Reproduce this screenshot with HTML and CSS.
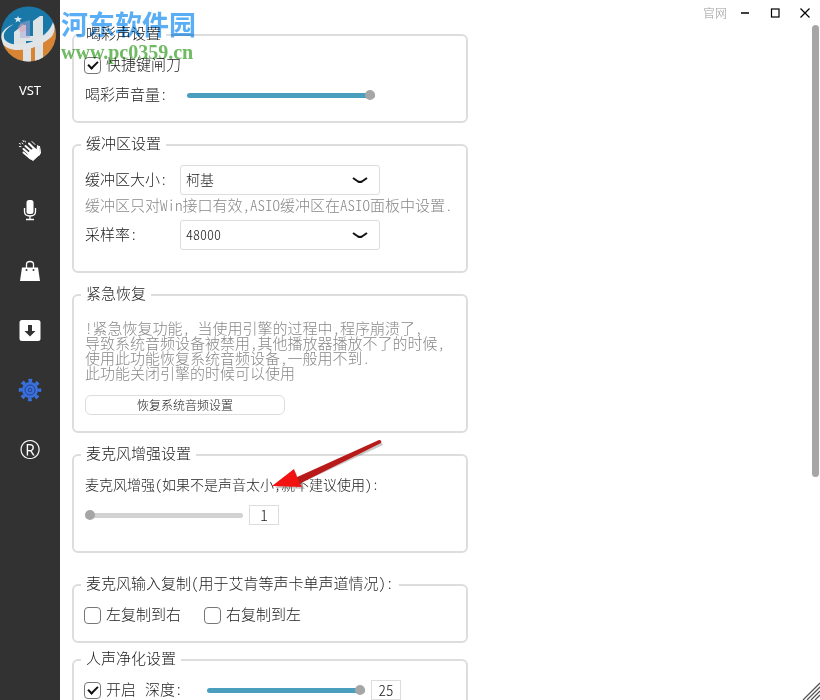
FILE: index.html
```html
<!DOCTYPE html>
<html lang="zh-CN">
<head>
    <meta charset="UTF-8">
    <meta name="viewport" content="width=device-width, initial-scale=1.0">
    <title>设置</title>
    <link rel="stylesheet" href="styles.css">
</head>
<body>

    <nav class="sidebar">
        <a class="nav-item nav-text" href="#vst">VST</a>
        <a class="nav-item" href="#effects" aria-label="喝彩">
            <svg width="24" height="24" viewBox="0 0 24 24" fill="none" stroke="#fff" stroke-linecap="round">
                <path d="M5.500 14.500l7 6M5.500 11l8 7M7.500 8l8 7M11 5.500l7 7" stroke-width="2"/>
                <path d="M10 15l6-5 3 2 .5-4.500q1.500 0 1.700 3l.3 6-6.500 6-4-3z" fill="#fff" stroke-width="1"/>
                <path d="M14 3.500l3 3M21.500 8.500q1 4 1 6.500l-1.500 2.500" stroke-width="1"/>
                <path d="M1.500 5.500l1 .5M5 2.500l.5 1M1.500 8.500l1.500.2M4 5l1 .8M7 3l.3 1" stroke-width="1"/>
            </svg>
        </a>
        <a class="nav-item" href="#mic" aria-label="麦克风">
            <svg width="24" height="24" viewBox="0 0 24 24" fill="none" stroke="#fff">
                <rect x="8.500" y="2" width="7" height="14" rx="2.500" fill="#fff" stroke="none"/>
                <path d="M6.500 10v3.500q0 4.500 5.500 4.500t5.500-4.500V10M12 18v3.500M8 21.500h8" stroke-width="1.300"/>
            </svg>
        </a>
        <a class="nav-item" href="#shop" aria-label="商店">
            <svg width="24" height="24" viewBox="0 0 24 24">
                <path d="M4 9.500h16l2 13.500H2z" fill="#fff"/>
                <path d="M8.500 11V6.500q0-3 3.500-3t3.500 3V11" fill="none" stroke="#fff" stroke-width="1.300"/>
                <circle cx="8.500" cy="12" r="1" fill="#323232"/>
                <circle cx="15.500" cy="12" r="1" fill="#323232"/>
            </svg>
        </a>
        <a class="nav-item" href="#download" aria-label="下载">
            <svg width="24" height="24" viewBox="0 0 24 24">
                <rect x="1.500" y="2" width="21" height="21" rx="2.500" fill="#fff"/>
                <path d="M10 7h4v6h3.500L12 18.500 6.500 13H10z" fill="#323232"/>
            </svg>
        </a>
        <a class="nav-item" href="#settings" aria-label="设置">
            <svg width="24" height="24" viewBox="0 0 24 24" fill="none" stroke="#3a70dc">
                <circle cx="12" cy="12" r="9.500" stroke-width="3.500" stroke-dasharray="3.730 3.730" stroke-dashoffset="1.860"/>
                <circle cx="12" cy="12" r="8" fill="#3a70dc" stroke="none"/>
                <circle cx="12" cy="12" r="5" stroke="#26418a" stroke-width="1"/>
                <circle cx="12" cy="12" r="1.800" fill="#3a70dc" stroke="#26418a"/>
            </svg>
        </a>
        <a class="nav-item nav-reg" href="#register">®</a>
    </nav>

    <div class="window">
        <header class="titlebar">
            <a class="site-link" href="#site">官网</a>
            <button class="win-button" aria-label="最小化">
                <svg width="10" height="10"><path d="M1 5h8" stroke="#000" stroke-width="1.500"/></svg>
            </button>
            <button class="win-button" aria-label="最大化">
                <svg width="10" height="10"><rect x="1.500" y="1" width="7.500" height="8" fill="none" stroke="#000" stroke-width="1.200"/></svg>
            </button>
            <button class="win-button" aria-label="关闭">
                <svg width="10" height="10"><path d="M.5.5l9 9M9.500.5l-9 9" stroke="#000" stroke-width="1.200"/></svg>
            </button>
        </header>

        <div class="body">
            <main class="settings">
                <fieldset>
                    <legend>喝彩声设置</legend>
                    <div class="row">
                        <label class="check"><input type="checkbox" checked><span>快捷键闸刀</span></label>
                    </div>
                    <div class="row">
                        <label class="volume-label" for="volume">喝彩声音量:</label>
                        <input class="slider slider-full slider-wide" id="volume" type="range" min="0" max="100" value="100">
                    </div>
                </fieldset>

                <fieldset class="buffer">
                    <legend>缓冲区设置</legend>
                    <div class="row">
                        <label class="select-label" for="buffer-size">缓冲区大小:</label>
                        <div class="select-box">
                            <select id="buffer-size"><option>柯基</option></select>
                            <svg width="16" height="8" viewBox="0 0 16 8"><path d="M1 2l5 3.500q2 1 4 0L15 2" fill="none" stroke="#111" stroke-width="2"/></svg>
                        </div>
                    </div>
                    <p class="note">缓冲区只对Win接口有效,ASIO缓冲区在ASIO面板中设置.</p>
                    <div class="row">
                        <label class="select-label" for="sample-rate">采样率:</label>
                        <div class="select-box">
                            <select id="sample-rate"><option>48000</option></select>
                            <svg width="16" height="8" viewBox="0 0 16 8"><path d="M1 2l5 3.500q2 1 4 0L15 2" fill="none" stroke="#111" stroke-width="2"/></svg>
                        </div>
                    </div>
                </fieldset>

                <fieldset class="restore">
                    <legend>紧急恢复</legend>
                    <p class="help">!紧急恢复功能,&nbsp;当使用引擎的过程中,程序崩溃了,<br>导致系统音频设备被禁用,其他播放器播放不了的时候,<br>使用此功能恢复系统音频设备,一般用不到.<br>此功能关闭引擎的时候可以使用</p>
                    <button class="restore-button">恢复系统音频设置</button>
                </fieldset>

                <fieldset class="boost">
                    <legend>麦克风增强设置</legend>
                    <div class="row">
                        <label class="boost-label" for="boost">麦克风增强(如果不是声音太小,就不建议使用):</label>
                    </div>
                    <div class="row">
                        <input class="slider" id="boost" type="range" min="1" max="10" value="1">
                        <input class="value" type="text" value="1" aria-label="增强值">
                    </div>
                </fieldset>

                <fieldset class="copy">
                    <legend>麦克风输入复制(用于艾肯等声卡单声道情况):</legend>
                    <div class="row copy-row">
                        <label class="check"><input type="checkbox"><span>左复制到右</span></label>
                        <label class="check"><input type="checkbox"><span>右复制到左</span></label>
                    </div>
                </fieldset>

                <fieldset class="clean">
                    <legend>人声净化设置</legend>
                    <div class="row">
                        <label class="check"><input type="checkbox" checked><span>开启</span></label>
                        <label class="depth-label" for="depth">深度:</label>
                        <input class="slider slider-full" id="depth" type="range" min="0" max="25" value="25">
                        <input class="value" type="text" value="25" aria-label="深度值">
                    </div>
                </fieldset>
            </main>
            <div class="scrollbar"><div class="thumb"></div></div>
        </div>
    </div>

    <!-- site stamp -->
    <div class="stamp">
        <svg class="stamp-logo" width="56" height="58" viewBox="0 0 56 58">
            <defs>
                <clipPath id="disc"><circle cx="28.500" cy="28" r="27.500"/></clipPath>
            </defs>
            <g clip-path="url(#disc)">
                <rect width="56" height="58" fill="#1a78a8"/>
                <path d="M0 36q14 10 32 3t23-22l3 41H0z" fill="#d98432"/>
                <path d="M14 26l9-7h3v20H14zM33 15l7-5h3v25l-10 4z" fill="#dde2e5"/>
                <path d="M24 30h12v5H24z" fill="#dde2e5"/>
                <path d="M23 41h8v17h-8zM35 39l8-4v23h-8z" fill="#dde2e5"/>
                <path d="M14 18Q0 26 5 34q8 8 26 2 18-7 22-20 5 12-7 19-14 10-31 9Q1 42 1 31q1-9 13-13z" fill="#e1e5e7"/>
                <path d="M20 17l10-3v18H20z" fill="#a9a5d8" opacity=".5"/>
                <circle cx="22" cy="22" r="4" fill="#e99eab" opacity=".4"/>
                <path d="M18 10l1 2 3 .2-2.300 1.700.8 2.600-2.500-1.500-2.500 1.500.8-2.600L14 12.200l3-.2z" fill="#d5e8f2"/>
            </g>
        </svg>
        <div class="stamp-text">
            <div class="stamp-name">河东软件园</div>
            <div class="stamp-url">www.pc0359.cn</div>
        </div>
    </div>

    <!-- pointer over the boost label -->
    <svg class="pointer" width="120" height="60" viewBox="0 0 120 60">
        <path d="M4 50l21-16 2 7 83-37 2 3-82 38 4 6z" fill="#777" opacity=".4"/>
        <path d="M24 40l84-38q3 0 2 3L28 46z" fill="#b81a1a"/>
        <path d="M1 48l22-17 3 8 2 5 3 5z" fill="#f31212"/>
    </svg>

    <svg class="grip" width="18" height="18" viewBox="0 0 18 18">
        <path d="M1 18L18 1M5 18L18 5M9 18L18 9M13 18l5-5" stroke="#555" stroke-width="1.300"/>
    </svg>

</body>
</html>
```
FILE: styles.css
```css
* {
    box-sizing: border-box;
}

body {
    display: flex;
    position: relative;
    height: 100vh;
    margin: 0;
    overflow: hidden;
    background-color: #fff;
    color: #222;
    font-family: "Noto Sans CJK SC", sans-serif;
    font-size: 15px;
    font-weight: 300;
    font-feature-settings: "hwid";
}

input, select, button {
    font: inherit;
    font-feature-settings: inherit;
    color: inherit;
}

.sidebar {
    flex: none;
    width: 60px;
    padding-top: 60px;
    background-color: #323232;
}

.nav-item {
    display: flex;
    align-items: center;
    justify-content: center;
    height: 60px;
    color: #fff;
    text-decoration: none;
}

.nav-text {
    font-family: "Noto Sans", sans-serif;
    font-size: 13px;
    font-weight: 400;
}

.nav-reg {
    padding-bottom: 3px;
    font-family: "Noto Sans", sans-serif;
    font-size: 26px;
}

.window {
    display: flex;
    flex: 1;
    flex-direction: column;
    min-width: 0;
}

.titlebar {
    display: flex;
    flex: none;
    align-items: center;
    justify-content: flex-end;
    height: 25px;
}

.site-link {
    margin-right: 3px;
    color: #999;
    font-size: 12px;
    text-decoration: none;
}

.win-button {
    display: flex;
    align-items: center;
    justify-content: center;
    width: 30px;
    height: 25px;
    padding: 0;
    border: none;
    background: none;
}

.body {
    display: flex;
    flex: 1;
    min-height: 0;
}

.settings {
    flex: 1;
    padding-left: 12px;
    overflow: hidden;
}

.scrollbar {
    width: 8px;
}

.thumb {
    width: 7px;
    height: 67%;
    border-radius: 4px;
    background-color: #a6a6a6;
}

fieldset {
    max-width: 396px;
    margin: 0 0 12px;
    padding: 6px 11px 11px;
    border: 2px solid #ddd;
    border-radius: 6px;
}

legend {
    margin-left: -4px;
    padding: 0 5px 3px;
    line-height: 16px;
}

.row {
    display: flex;
    align-items: center;
    height: 30px;
}

.row label {
    line-height: 20px;
}

.row > label:not(.check),
.check span {
    padding-bottom: 2px;
}

.buffer {
    padding-top: 11px;
    padding-bottom: 21px;
}

.restore {
    padding-top: 16px;
    padding-bottom: 16px;
}

.boost {
    margin-bottom: 22px;
    padding-bottom: 21px;
}

.copy {
    margin-bottom: 7px;
}

.check {
    display: flex;
    align-items: center;
    gap: 5px;
    margin-left: -1px;
}

.check input {
    display: grid;
    place-items: center;
    width: 17px;
    height: 17px;
    margin: 0;
    border: 1px solid #777;
    border-radius: 4px;
    appearance: none;
}

.check input:checked::before {
    content: "";
    width: 8px;
    height: 4px;
    margin-bottom: 3px;
    border-left: 2px solid #111;
    border-bottom: 2px solid #111;
    transform: rotate(-45deg);
}

.copy-row {
    gap: 24px;
}

.volume-label {
    width: 102px;
}

.select-label {
    width: 95px;
}

.depth-label {
    width: 62px;
    margin-left: 9px;
}

.boost-label {
    font-size: 14px;
}

.select-box {
    display: grid;
    width: 200px;
    align-items: center;
}

.select-box select,
.select-box svg {
    grid-area: 1 / 1;
}

.select-box svg {
    justify-self: end;
    margin-right: 12px;
    pointer-events: none;
}

.select-box select {
    height: 30px;
    padding: 0 5px 2px;
    border: 1px solid #ddd;
    border-radius: 3px;
    background-color: #fff;
    font-size: 14px;
    appearance: none;
}

.note {
    margin: 0 0 5px;
    color: #888;
    line-height: 20px;
    white-space: nowrap;
}

.help {
    margin: 0 0 15px;
    color: #888;
    line-height: 15px;
    white-space: nowrap;
}

.restore-button {
    display: block;
    width: 200px;
    height: 20px;
    padding: 0;
    border: 1px solid #ddd;
    border-radius: 6px;
    background-color: #fff;
    font-size: 12px;
    line-height: 18px;
}

.slider {
    width: 158px;
    height: 10px;
    margin: 0;
    background: none;
    appearance: none;
}

.slider-wide {
    width: 188px;
}

.slider::-webkit-slider-runnable-track {
    height: 5px;
    border-radius: 3px;
    background-color: #d2d2d2;
}

.slider-full::-webkit-slider-runnable-track {
    background-color: #4a9fbf;
}

.slider::-webkit-slider-thumb {
    width: 10px;
    height: 10px;
    margin-top: -3px;
    border-radius: 50%;
    background-color: #a6a6a6;
    appearance: none;
}

.value {
    width: 30px;
    height: 20px;
    margin-left: 6px;
    padding: 0 0 2px;
    border: 1px solid #ddd;
    background-color: #fff;
    text-align: center;
}

.stamp {
    display: flex;
    position: absolute;
    top: 6px;
    left: 0;
    gap: 5px;
    pointer-events: none;
}

.stamp-text {
    mix-blend-mode: multiply;
}

.stamp-name {
    color: #5aaef5;
    font-size: 27px;
    font-weight: 700;
    line-height: 36px;
}

.stamp-url {
    color: #6fba62;
    font-family: "Liberation Serif", serif;
    font-size: 20px;
    font-weight: 700;
    line-height: 20px;
}

.pointer {
    position: absolute;
    top: 438px;
    left: 271px;
    pointer-events: none;
}

.grip {
    position: absolute;
    right: 0;
    bottom: 0;
}
```
